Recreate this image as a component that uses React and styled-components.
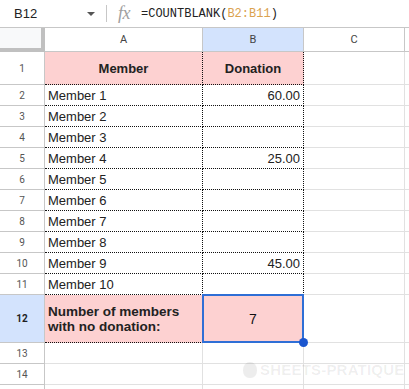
import React from 'react'
import styled, { createGlobalStyle, css } from 'styled-components'

const GlobalStyle = createGlobalStyle`
  html, body {
    margin: 0;
    padding: 0;
    background: #fff;
  }
  body {
    font-family: "Liberation Sans", Arial, sans-serif;
    overflow: hidden;
  }
`

const PINK = '#fdd1d1'
const SELECT = '#d3e3fd'
const GRID = '#e1e1e1'
const BLUE = '#2f6fd6'

const rows = [
  { n: 1, h: 33, a: 'Member', b: 'Donation', head: true },
  { n: 2, h: 21, a: 'Member 1', b: '60.00' },
  { n: 3, h: 21, a: 'Member 2', b: '' },
  { n: 4, h: 21, a: 'Member 3', b: '' },
  { n: 5, h: 21, a: 'Member 4', b: '25.00' },
  { n: 6, h: 21, a: 'Member 5', b: '' },
  { n: 7, h: 21, a: 'Member 6', b: '' },
  { n: 8, h: 21, a: 'Member 7', b: '' },
  { n: 9, h: 21, a: 'Member 8', b: '' },
  { n: 10, h: 21, a: 'Member 9', b: '45.00' },
  { n: 11, h: 21, a: 'Member 10', b: '' },
  { n: 12, h: 48, total: true },
  { n: 13, h: 21 },
  { n: 14, h: 21 },
  { n: 15, h: 21, hidden: true },
]

function App() {
  return (
    <Wrapper>
      <GlobalStyle />
      <FormulaBar>
        <NameBox>
          <span>B12</span>
          <Caret />
        </NameBox>
        <Divider />
        <Fx>fx</Fx>
        <Formula>
          =COUNTBLANK(<Ref>B2:B11</Ref>)
        </Formula>
      </FormulaBar>

      <Sheet $rows={rows.map((r) => r.h + 'px').join(' ')}>
        <Corner />
        <ColHead>A</ColHead>
        <ColHead $active>B</ColHead>
        <ColHead>C</ColHead>
        <ColHead />

        {rows.map((r) => (
          <React.Fragment key={r.n}>
            <RowHead $active={r.total}>{r.hidden ? '' : r.n}</RowHead>
            {r.total ? (
              <>
                <Cell $fill $dotted $bold $wrap>
                  Number of members<br />with no donation:
                </Cell>
                <Cell $fill $center $selected>
                  7
                  <Handle />
                </Cell>
              </>
            ) : r.a ? (
              <>
                <Cell $fill={r.head} $dotted $bold={r.head} $center={r.head}>
                  {r.a}
                </Cell>
                <Cell
                  $fill={r.head}
                  $dotted
                  $bold={r.head}
                  $center={r.head}
                  $right={!r.head}
                >
                  {r.b}
                </Cell>
              </>
            ) : (
              <>
                <Cell />
                <Cell />
              </>
            )}
            <Cell />
            <Cell />
          </React.Fragment>
        ))}

        <Watermark>
          <Logo />
          SHEETS-PRATIQUE
        </Watermark>
      </Sheet>
    </Wrapper>
  )
}

const Wrapper = styled.div`
  width: 409px;
  height: 389px;
  overflow: hidden;
  color: #222;
`

const FormulaBar = styled.div`
  display: flex;
  align-items: center;
  height: 27px;
  border-bottom: 1px solid #c7c7c7;
  font-size: 13px;
`

const NameBox = styled.div`
  display: flex;
  align-items: center;
  justify-content: space-between;
  width: 81px;
  padding-left: 14px;
  color: #222;
`

const Caret = styled.div`
  width: 0;
  height: 0;
  border-left: 4px solid transparent;
  border-right: 4px solid transparent;
  border-top: 4px solid #555;
`

const Divider = styled.div`
  width: 1px;
  height: 17px;
  background: #c7c7c7;
  margin-left: 11px;
`

const Fx = styled.div`
  margin-left: 11px;
  font-family: "Liberation Serif", serif;
  font-style: italic;
  font-size: 18px;
  color: #a0a0a0;
  letter-spacing: -0.5px;
`

const Formula = styled.div`
  margin-left: 11px;
  font-family: "Liberation Mono", monospace;
  font-size: 12px;
  color: #222;
`

const Ref = styled.span`
  color: #dba24f;
`

const Sheet = styled.div`
  position: relative;
  display: grid;
  grid-template-columns: 45px 158px 101px 101px 1fr;
  grid-template-rows: 24px ${(p) => p.$rows};
`

const Corner = styled.div`
  box-sizing: border-box;
  background: #f8f9fa;
  border-right: 4px solid #c0c0c0;
  border-bottom: 4px solid #c0c0c0;
`

const ColHead = styled.div`
  box-sizing: border-box;
  display: flex;
  align-items: center;
  justify-content: center;
  background: ${(p) => (p.$active ? SELECT : '#fff')};
  border-right: 1px solid #c7c7c7;
  border-bottom: 1px solid #c7c7c7;
  font-family: Roboto, "Liberation Sans", sans-serif;
  font-size: 11px;
  color: #444;
`

const RowHead = styled.div`
  box-sizing: border-box;
  display: flex;
  align-items: center;
  justify-content: center;
  background: ${(p) => (p.$active ? SELECT : '#fff')};
  border-right: 1px solid #c7c7c7;
  border-bottom: 1px solid #c7c7c7;
  font-family: Roboto, "Liberation Sans", sans-serif;
  font-size: 10px;
  font-weight: ${(p) => (p.$active ? 700 : 400)};
  color: ${(p) => (p.$active ? '#1f1f1f' : '#555')};
`

const Cell = styled.div`
  position: relative;
  box-sizing: border-box;
  display: flex;
  align-items: center;
  padding: 0 3px;
  background: ${(p) => (p.$fill ? PINK : '#fff')};
  border-right: 1px solid ${GRID};
  border-bottom: 1px solid ${GRID};
  font-size: 13px;
  color: #222;
  white-space: nowrap;
  ${(p) =>
    p.$dotted &&
    css`
      border-right: 1px dotted #111;
      border-bottom: 1px dotted #111;
    `}
  ${(p) => p.$bold && css`font-weight: 700;`}
  ${(p) => p.$center && css`justify-content: center;`}
  ${(p) => p.$right && css`justify-content: flex-end;`}
  ${(p) =>
    p.$wrap &&
    css`
      line-height: 15px;
      font-size: 13.5px;
      padding-left: 3px;
    `}
  ${(p) =>
    p.$selected &&
    css`
      font-size: 14px;
      color: #111;
      &::after {
        content: '';
        position: absolute;
        left: -1px;
        top: -1px;
        right: -1px;
        bottom: -1px;
        border: 2px solid ${BLUE};
      }
    `}
`

const Handle = styled.span`
  position: absolute;
  right: -5px;
  bottom: -5px;
  width: 9px;
  height: 9px;
  border-radius: 50%;
  background: #1a56cf;
  z-index: 2;
`

const Watermark = styled.div`
  position: absolute;
  left: 243px;
  top: 333px;
  display: flex;
  align-items: center;
  gap: 3px;
  font-family: "Liberation Sans", Arial, sans-serif;
  font-size: 15px;
  font-weight: 700;
  color: rgba(0, 0, 0, 0.07);
  letter-spacing: 0.2px;
  pointer-events: none;
`

const Logo = styled.div`
  width: 14px;
  height: 16px;
  border-radius: 50% 50% 45% 45%;
  background: rgba(0, 0, 0, 0.07);
`

export default App
